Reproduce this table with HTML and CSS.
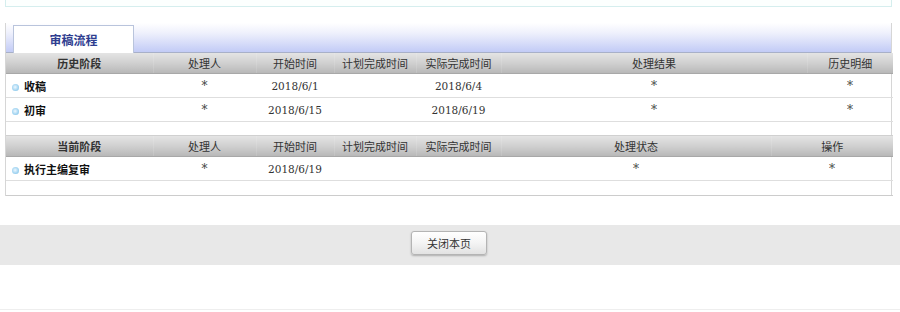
FILE: index.html
```
<!DOCTYPE html>
<html lang="zh-CN">
<head>
<meta charset="utf-8">
<title>审稿流程</title>
<link rel="stylesheet" href="styles.css">
</head>
<body>
<div class="page">
  <div class="topbox"></div>
  <div class="panel">
    <div class="tabbar">
      <div class="tab">审稿流程</div>
    </div>
    <table class="grid">
      <colgroup>
        <col style="width:147px"><col style="width:103px"><col style="width:78px"><col style="width:82px"><col style="width:85px"><col style="width:306px"><col style="width:86px">
      </colgroup>
      <thead>
        <tr><th>历史阶段</th><th>处理人</th><th>开始时间</th><th>计划完成时间</th><th>实际完成时间</th><th>处理结果</th><th>历史明细</th></tr>
      </thead>
      <tbody>
        <tr><td class="stage"><span class="dot"></span>收稿</td><td class="star">*</td><td class="date">2018/6/1</td><td></td><td class="date">2018/6/4</td><td class="star">*</td><td class="star">*</td></tr>
        <tr><td class="stage"><span class="dot"></span>初审</td><td class="star">*</td><td class="date">2018/6/15</td><td></td><td class="date">2018/6/19</td><td class="star">*</td><td class="star">*</td></tr>
        <tr class="blank"><td colspan="7"></td></tr>
      </tbody>
    </table>
    <table class="grid">
      <colgroup>
        <col style="width:147px"><col style="width:103px"><col style="width:78px"><col style="width:82px"><col style="width:85px"><col style="width:270px"><col style="width:122px">
      </colgroup>
      <thead>
        <tr><th>当前阶段</th><th>处理人</th><th>开始时间</th><th>计划完成时间</th><th>实际完成时间</th><th>处理状态</th><th>操作</th></tr>
      </thead>
      <tbody>
        <tr><td class="stage"><span class="dot"></span>执行主编复审</td><td class="star">*</td><td class="date">2018/6/19</td><td></td><td></td><td class="star">*</td><td class="star">*</td></tr>
        <tr class="blank last"><td colspan="7"></td></tr>
      </tbody>
    </table>
  </div>
  <div class="footer">
    <button class="btn" type="button">关闭本页</button>
  </div>
  <div class="bottomline"></div>
</div>
</body>
</html>
```
FILE: styles.css
```
html, body {
  margin: 0;
  padding: 0;
  background: #ffffff;
}
body {
  font-family: "Noto Sans CJK SC", "DejaVu Sans", sans-serif;
  font-size: 11px;
  color: #222;
}
.page {
  width: 900px;
  height: 312px;
  overflow: hidden;
}
.topbox {
  margin: 0 8px 0 5px;
  height: 6px;
  border: 1px solid #d5eeee;
  border-top: none;
  background: #fcfffe;
}
.panel {
  margin: 16px 8px 0 5px;
  border-left: 1px solid #d6d6d6;
  border-right: 1px solid #d6d6d6;
}
.tabbar {
  height: 30px;
  background: linear-gradient(to bottom, #ffffff 0%, #eef0fc 35%, #c2cbf6 100%);
  border-bottom: 1px solid #a8b0c8;
  display: flex;
  align-items: flex-end;
  padding-left: 7px;
  box-sizing: border-box;
}
.tab {
  width: 121px;
  height: 28px;
  box-sizing: border-box;
  background: #ffffff;
  border: 1px solid #b9c4dc;
  border-bottom: none;
  display: flex;
  align-items: center;
  justify-content: center;
  font-weight: bold;
  font-size: 12px;
  color: #2e3d8f;
  margin-bottom: -1px;
}
.grid {
  width: 100%;
  border-collapse: collapse;
  table-layout: fixed;
}
.grid th {
  height: 20px;
  padding: 0;
  font-weight: normal;
  color: #333;
  background: linear-gradient(to bottom, #e4e4e4 0%, #d0d0d0 50%, #b8b8b8 100%);
  border-left: 1px solid rgba(255,255,255,0.12);
  border-bottom: 1px solid #a8a8a8;
  text-align: center;
}
.grid th:first-child {
  border-left: none;
  font-weight: bold;
}
.grid td {
  height: 23px;
  padding: 0;
  text-align: center;
  border-bottom: 1px solid #dedede;
  color: #333;
}
.grid td.star {
  font-family: "DejaVu Serif", serif;
  font-size: 12px;
  color: #444;
}
.grid td.date {
  font-family: "DejaVu Serif", serif;
  font-size: 10.5px;
}
.grid td.stage {
  text-align: left;
  font-weight: bold;
  color: #111;
  padding-left: 6px;
}
.dot {
  display: inline-block;
  width: 7px;
  height: 7px;
  border-radius: 50%;
  background: radial-gradient(circle at 45% 45%, #eef8ff 0%, #a6d6f2 55%, #6ab4df 100%);
  margin-right: 5px;
  vertical-align: 0;
}
.grid tr.blank td {
  height: 13px;
  border-bottom: 1px solid #d0d0d0;
}
.grid tr.last td {
  height: 14px;
  border-bottom: 1px solid #cccccc;
}
.footer {
  margin-top: 29px;
  height: 40px;
  background: #e8e8e8;
  display: flex;
  justify-content: center;
  align-items: center;
}
.btn {
  width: 76px;
  height: 24px;
  margin-left: -2px;
  margin-top: -4px;
  font-family: "Noto Sans CJK SC", sans-serif;
  font-size: 11px;
  color: #333;
  background: linear-gradient(to bottom, #ffffff 0%, #f4f4f4 50%, #e2e2e2 100%);
  border: 1px solid #b4b4b4;
  border-radius: 3px;
  box-shadow: 0 1px 2px rgba(0,0,0,0.25);
  padding: 0;
}
.bottomline {
  margin-top: 44px;
  height: 1px;
  background: #eeeeee;
}
```
